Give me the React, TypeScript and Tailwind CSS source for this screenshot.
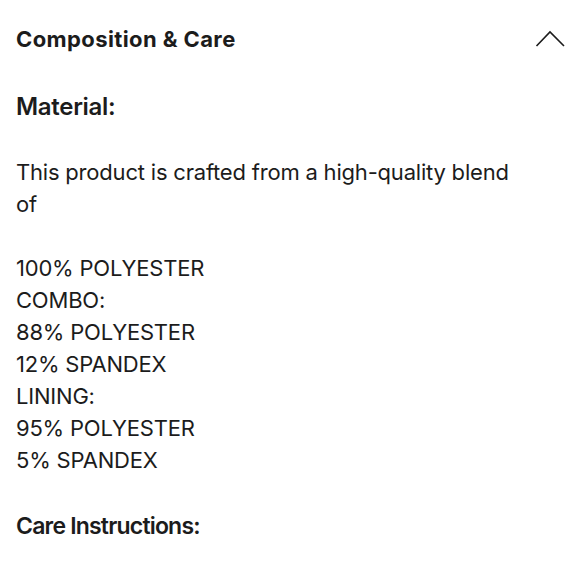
import React from 'react';

const lines = [
  '100% POLYESTER',
  'COMBO:',
  '88% POLYESTER',
  '12% SPANDEX',
  'LINING:',
  '95% POLYESTER',
  '5% SPANDEX',
];

const ChevronUp: React.FC = () => (
  <svg width="31" height="17" viewBox="0 0 31 17" fill="none" className="shrink-0">
    <path d="M1.5 16L15 2L29 16" stroke="#1c1c1c" strokeWidth="1.6" />
  </svg>
);

export default function App() {
  return (
    <div
      className="w-[580px] h-[580px] overflow-hidden bg-white text-[#1c1c1c] px-4"
      style={{ fontFamily: 'Inter, "Noto Sans", sans-serif' }}
    >
      <div className="flex items-center justify-between pt-[25px]">
        <h2 className="text-[22px] leading-[28px] font-bold tracking-[0.4px]">Composition &amp; Care</h2>
        <div className="mr-[-2px] mt-[-1px]">
          <ChevronUp />
        </div>
      </div>

      <h3 className="mt-[38px] text-[24px] leading-[32px] font-semibold tracking-[-0.3px]">Material:</h3>

      <p className="mt-[33px] max-w-[500px] text-[22px] leading-[32px] tracking-[-0.2px]">
        This product is crafted from a high-quality blend of
      </p>

      <div className="mt-[32px] text-[22px] leading-[32px] tracking-[-0.2px]">
        {lines.map((l) => (
          <div key={l}>{l}</div>
        ))}
      </div>

      <h3 className="mt-[34px] text-[23px] leading-[32px] font-semibold tracking-[-0.8px]">Care Instructions:</h3>
    </div>
  );
}
